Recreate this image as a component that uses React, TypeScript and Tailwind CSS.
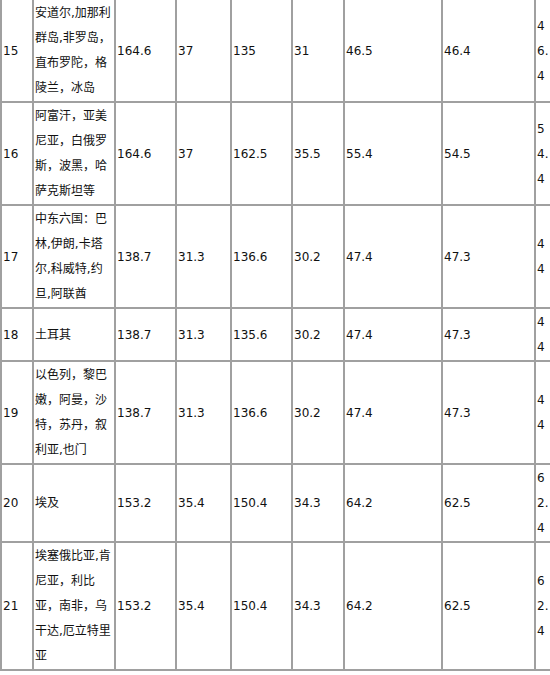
import React from 'react';

type Row = {
  no: string;
  region: string;
  values: string[];
  last: string;
};

const rows: Row[] = [
  { no: '15', region: '安道尔,加那利群岛,非罗岛，直布罗陀，格陵兰，冰岛', values: ['164.6', '37', '135', '31', '46.5', '46.4'], last: '46.4' },
  { no: '16', region: '阿富汗，亚美尼亚，白俄罗斯，波黑，哈萨克斯坦等', values: ['164.6', '37', '162.5', '35.5', '55.4', '54.5'], last: '54.4' },
  { no: '17', region: '中东六国：巴林,伊朗,卡塔尔,科威特,约旦,阿联酋', values: ['138.7', '31.3', '136.6', '30.2', '47.4', '47.3'], last: '44' },
  { no: '18', region: '土耳其', values: ['138.7', '31.3', '135.6', '30.2', '47.4', '47.3'], last: '44' },
  { no: '19', region: '以色列，黎巴嫩，阿曼，沙特，苏丹，叙利亚,也门', values: ['138.7', '31.3', '136.6', '30.2', '47.4', '47.3'], last: '44' },
  { no: '20', region: '埃及', values: ['153.2', '35.4', '150.4', '34.3', '64.2', '62.5'], last: '62.4' },
  { no: '21', region: '埃塞俄比亚,肯尼亚，利比亚，南非，乌干达,厄立特里亚', values: ['153.2', '35.4', '150.4', '34.3', '64.2', '62.5'], last: '62.4' },
];

// border-box widths of the value columns (col3..col8)
const valueWidths = ['w-[61px]', 'w-[55px]', 'w-[61px]', 'w-[52px]', 'w-[98px]', 'w-[93px]'];

const cell = 'border border-[#a0a0a0] px-[1px] pt-[1px] pb-0 align-middle';

export default function App() {
  return (
    <div className="h-[675px] w-[550px] overflow-hidden bg-white">
      <table
        className="-mt-[2px] w-[552px] table-fixed border-separate border-spacing-0 border border-[#a0a0a0] text-[12px] leading-[25px] text-[#111]"
        style={{ fontFamily: '"DejaVu Sans", "Noto Sans CJK SC", sans-serif' }}
      >
        <colgroup>
          <col className="w-[32px]" />
          <col className="w-[82px]" />
          {valueWidths.map((w, i) => (
            <col key={i} className={w} />
          ))}
          <col className="w-[16px]" />
        </colgroup>
        <tbody>
          {rows.map(row => (
            <tr key={row.no}>
              <td className={cell}>{row.no}</td>
              <td className={cell}>{row.region}</td>
              {row.values.map((v, i) => (
                <td key={i} className={cell}>{v}</td>
              ))}
              <td className={`${cell} break-all`}>{row.last}</td>
            </tr>
          ))}
        </tbody>
      </table>
    </div>
  );
}
